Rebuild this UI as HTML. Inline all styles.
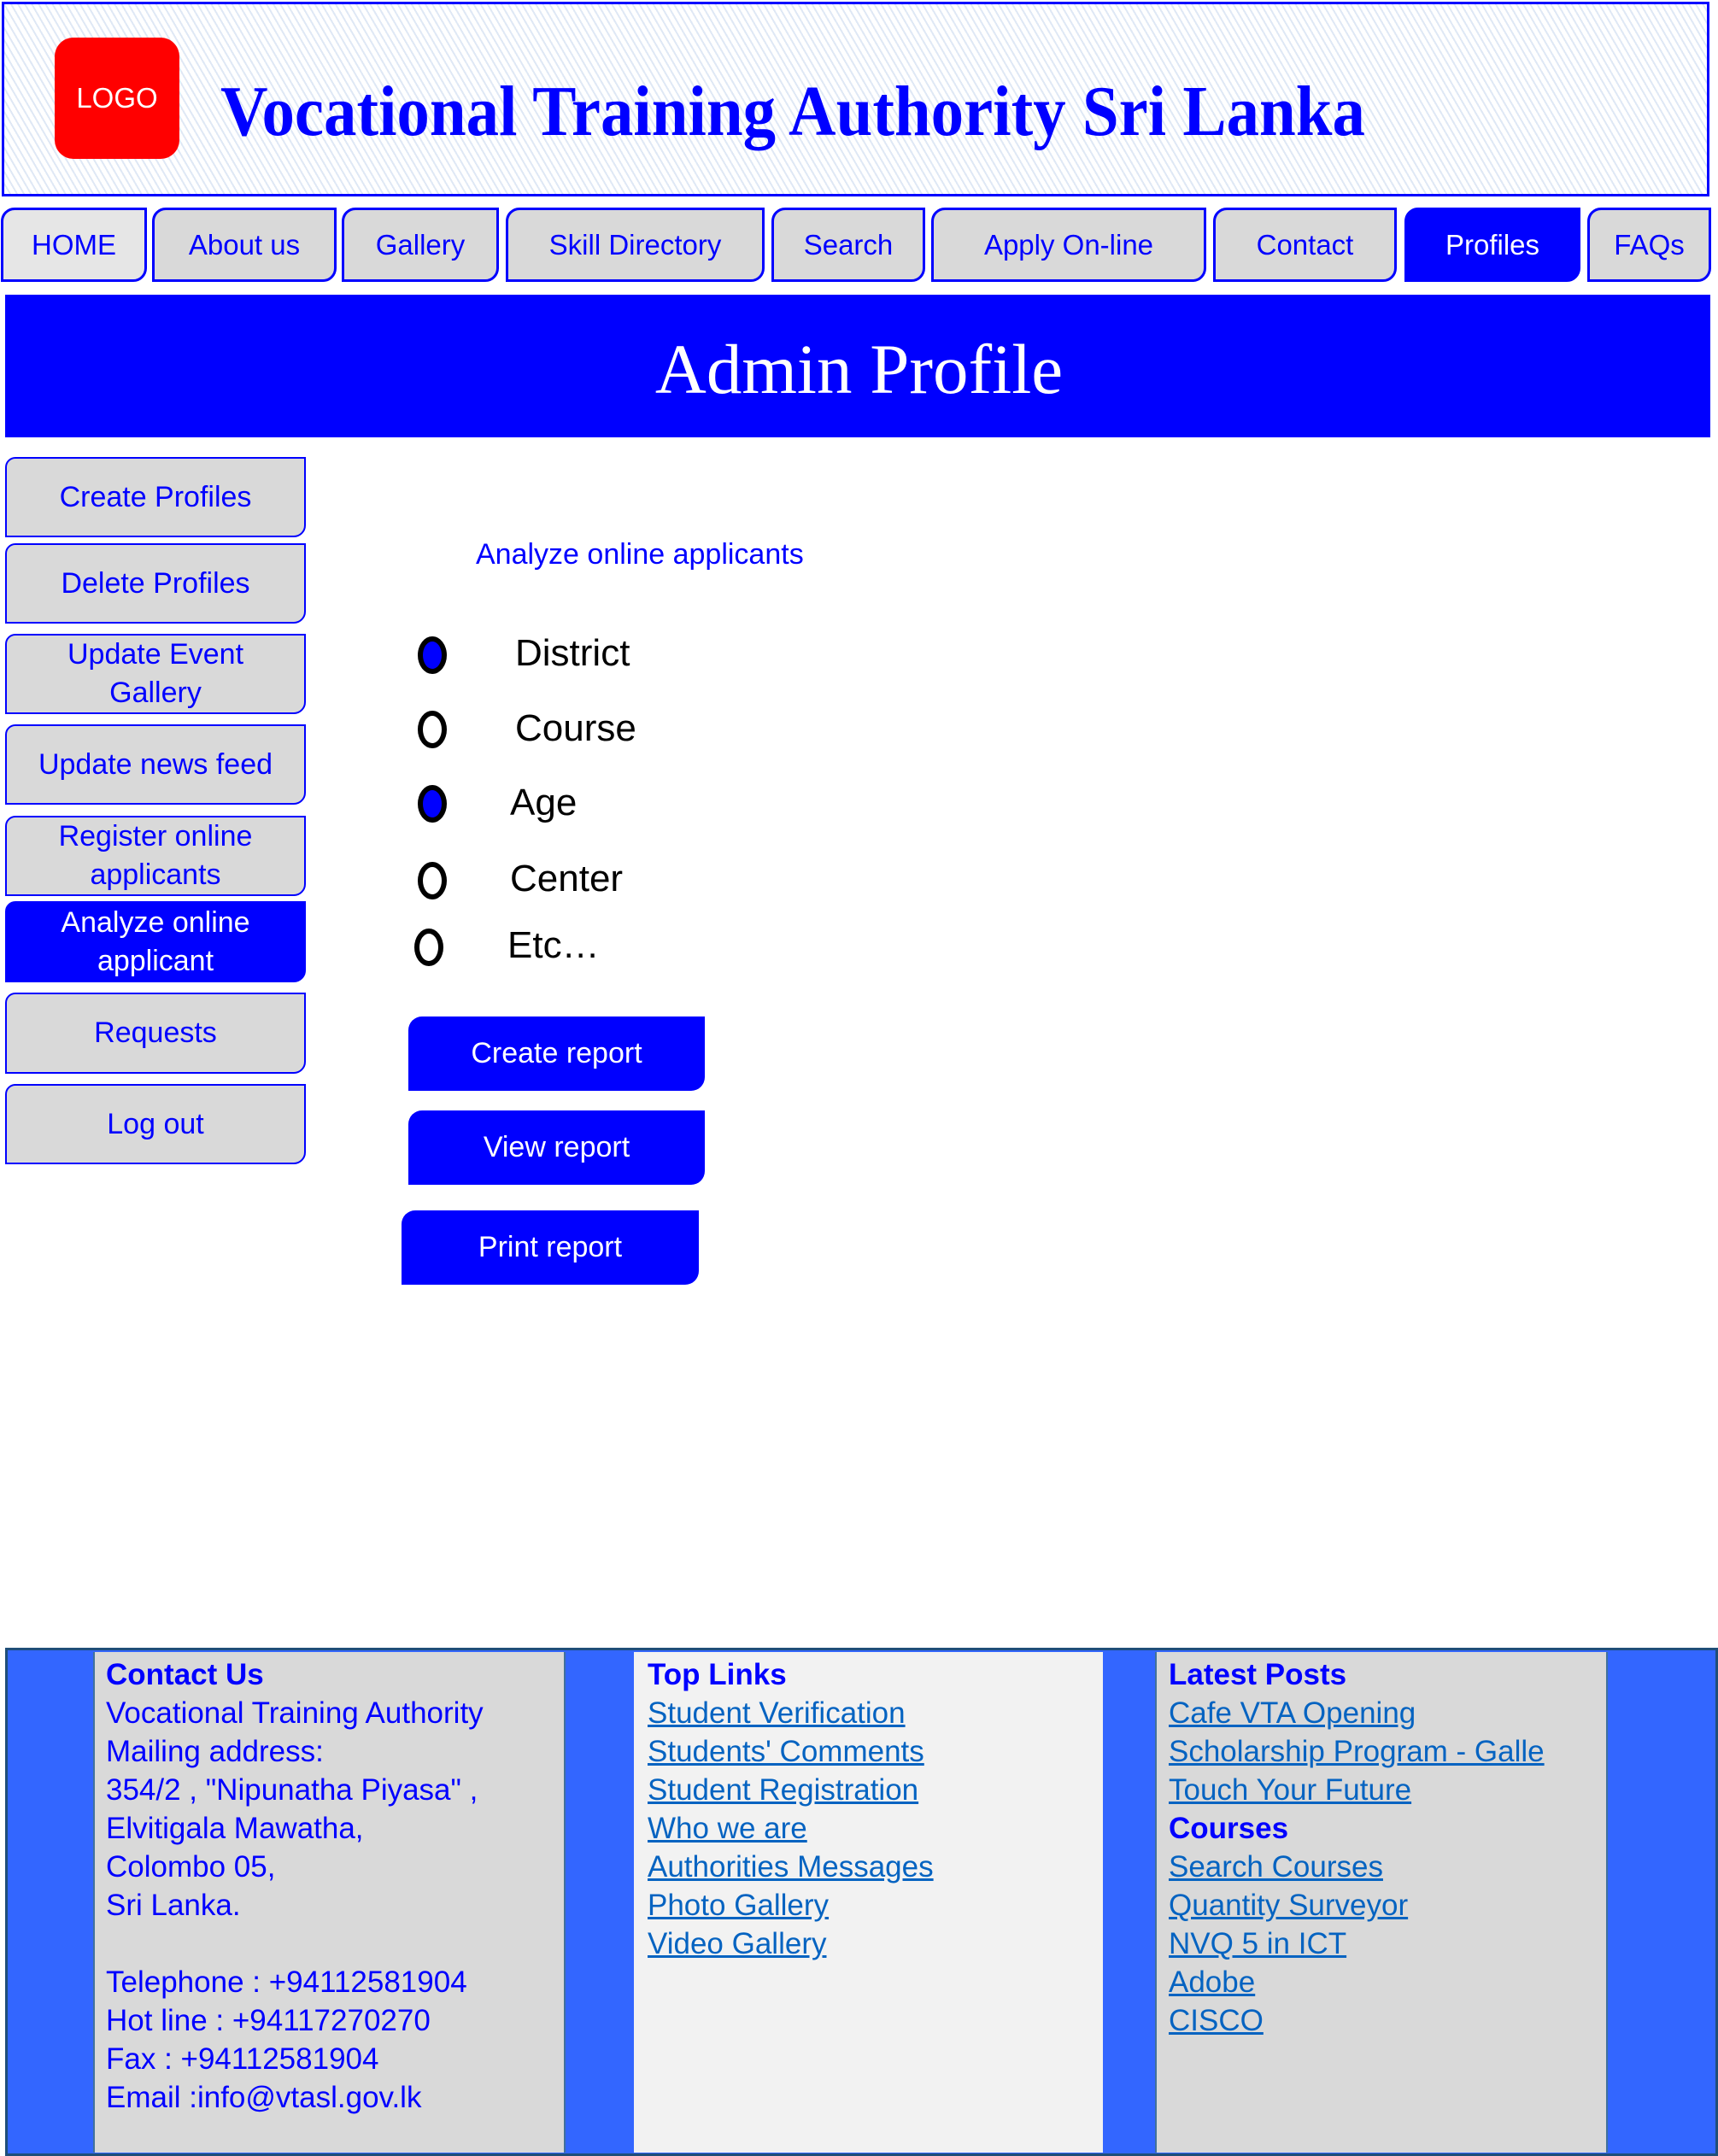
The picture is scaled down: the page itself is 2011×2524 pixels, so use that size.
<!DOCTYPE html>
<html><head><meta charset="utf-8"><style>
*{margin:0;padding:0;box-sizing:border-box}
body{width:2011px;height:2524px;position:relative;background:#fff;font-family:"Liberation Sans",sans-serif;overflow:hidden}
.a{position:absolute}
.hdr{left:2px;top:2px;width:1999px;height:228px;border:3px solid #00f;background:repeating-linear-gradient(60deg,#fff 0 5px,#dfe8f5 5px 7px)}
.logo{left:64px;top:44px;width:146px;height:142px;background:#f00;border-radius:22px;color:#fff;font-size:33px;display:flex;align-items:center;justify-content:center}
.nav{top:243px;height:87px;border:3px solid #00f;background:#d9d9d9;color:#00f;font-size:33px;display:flex;align-items:center;justify-content:center;border-radius:16px 0 16px 0}
.sb{left:6px;width:352px;border:2px solid #00f;background:#d9d9d9;color:#00f;font-size:34px;text-align:center;display:flex;align-items:center;justify-content:center;line-height:45px;border-radius:12px 0 14px 0}
.rb{background:#00f;color:#fff;font-size:34px;display:flex;align-items:center;justify-content:center;border-radius:16px 0 16px 0}
.rad{width:34px;height:44px;border:6px solid #000;border-radius:50%}
.lbl{font-size:44px;color:#000}
.ft{font-size:35px;line-height:45px;color:#00f}
.ft a{color:#0563c1;text-decoration:underline}
.ft b{color:#00f}
</style></head><body>
<div class="a hdr"></div>
<div class="a logo">LOGO</div>
<svg class="a" style="left:250px;top:80px" width="1400" height="110"><text x="8" y="78" textLength="1340" lengthAdjust="spacingAndGlyphs" font-family="Liberation Serif" font-weight="bold" font-size="84" fill="#00f">Vocational Training Authority Sri Lanka</text></svg>

<div class="a nav" style="left:1px;width:171px;background:#e6e6e6">HOME</div>
<div class="a nav" style="left:178px;width:216px">About us</div>
<div class="a nav" style="left:400px;width:184px">Gallery</div>
<div class="a nav" style="left:592px;width:303px">Skill Directory</div>
<div class="a nav" style="left:903px;width:180px">Search</div>
<div class="a nav" style="left:1090px;width:322px">Apply On-line</div>
<div class="a nav" style="left:1420px;width:215px">Contact</div>
<div class="a nav" style="left:1644px;width:206px;background:#00f;color:#fff">Profiles</div>
<div class="a nav" style="left:1858px;width:145px">FAQs</div>

<div class="a" style="left:6px;top:345px;width:1996px;height:167px;background:#00f"></div>
<div class="a" style="left:0;top:384px;width:2011px;text-align:center;color:#fff;font-family:'Liberation Serif',serif;font-size:83px">Admin Profile</div>

<div class="a sb" style="top:535px;height:94px">Create Profiles</div>
<div class="a sb" style="top:636px;height:94px">Delete Profiles</div>
<div class="a sb" style="top:742px;height:94px">Update Event<br>Gallery</div>
<div class="a sb" style="top:848px;height:94px">Update news feed</div>
<div class="a sb" style="top:955px;height:94px">Register online<br>applicants</div>
<div class="a sb" style="top:1055px;height:95px;background:#00f;color:#fff">Analyze online<br>applicant</div>
<div class="a sb" style="top:1162px;height:95px">Requests</div>
<div class="a sb" style="top:1269px;height:94px">Log out</div>

<div class="a" style="left:557px;top:630px;color:#00f;font-size:34px">Analyze online applicants</div>

<div class="a rad" style="left:489px;top:745px;background:#00f"></div>
<div class="a rad" style="left:489px;top:832px"></div>
<div class="a rad" style="left:489px;top:919px;background:#00f"></div>
<div class="a rad" style="left:489px;top:1009px"></div>
<div class="a rad" style="left:485px;top:1087px"></div>
<div class="a lbl" style="left:603px;top:740px">District</div>
<div class="a lbl" style="left:603px;top:828px">Course</div>
<div class="a lbl" style="left:597px;top:915px">Age</div>
<div class="a lbl" style="left:597px;top:1004px">Center</div>
<div class="a lbl" style="left:594px;top:1082px">Etc…</div>

<div class="a rb" style="left:478px;top:1190px;width:347px;height:87px">Create report</div>
<div class="a rb" style="left:478px;top:1300px;width:347px;height:87px">View report</div>
<div class="a rb" style="left:470px;top:1417px;width:348px;height:87px">Print report</div>

<div class="a" style="left:6px;top:1929px;width:2005px;height:595px;background:#3366ff;border:3px solid #1f4e79"></div>
<div class="a" style="left:109px;top:1934px;width:553px;height:586px;background:#d9d9d9;border-left:2px solid #41719c;border-right:2px solid #41719c"></div>
<div class="a" style="left:742px;top:1934px;width:549px;height:586px;background:#f2f2f2"></div>
<div class="a" style="left:1352px;top:1934px;width:530px;height:586px;background:#d9d9d9;border-left:2px solid #41719c;border-right:2px solid #41719c"></div>

<div class="a ft" style="left:124px;top:1938px"><b>Contact Us</b><br>Vocational Training Authority<br>Mailing address:<br>354/2 , "Nipunatha Piyasa" ,<br>Elvitigala Mawatha,<br>Colombo 05,<br>Sri Lanka.<br><br>Telephone : +94112581904<br>Hot line : +94117270270<br>Fax : +94112581904<br>Email :info@vtasl.gov.lk</div>
<div class="a ft" style="left:758px;top:1938px"><b>Top Links</b><br><a>Student Verification</a><br><a>Students' Comments</a><br><a>Student Registration</a><br><a>Who we are</a><br><a>Authorities Messages</a><br><a>Photo Gallery</a><br><a>Video Gallery</a></div>
<div class="a ft" style="left:1368px;top:1938px"><b>Latest Posts</b><br><a>Cafe VTA Opening</a><br><a>Scholarship Program - Galle</a><br><a>Touch Your Future</a><br><b>Courses</b><br><a>Search Courses</a><br><a>Quantity Surveyor</a><br><a>NVQ 5 in ICT</a><br><a>Adobe</a><br><a>CISCO</a></div>
</body></html>
